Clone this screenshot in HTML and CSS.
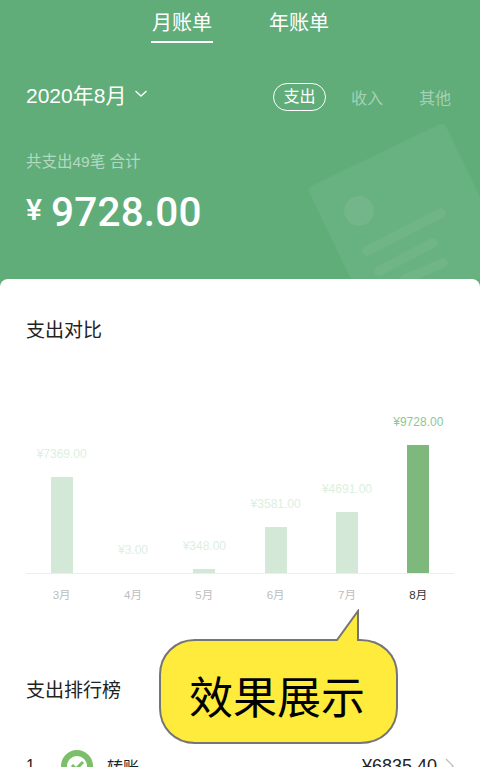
FILE: index.html
```html
<!DOCTYPE html>
<html lang="zh-CN">
<head>
    <meta charset="UTF-8">
    <meta name="viewport" content="width=device-width, initial-scale=1.0">
    <title>月账单</title>
    <link rel="stylesheet" href="styles.css">
</head>
<body>

<div class="page">
    <header class="header">
        <svg class="header-deco" width="200" height="170" viewBox="280 109 200 170">
            <rect x="307" y="188" width="152" height="200" rx="5" fill="#fff" fill-opacity="0.05" transform="rotate(-25.7 307 188)"/>
            <circle cx="359" cy="211" r="15" fill="#fff" fill-opacity="0.07"/>
            <line x1="367" y1="251" x2="441" y2="213" stroke="#fff" stroke-opacity="0.05" stroke-width="10" stroke-linecap="round"/>
            <line x1="379" y1="271" x2="433" y2="243" stroke="#fff" stroke-opacity="0.05" stroke-width="10" stroke-linecap="round"/>
            <line x1="405" y1="279" x2="443" y2="263" stroke="#fff" stroke-opacity="0.05" stroke-width="10" stroke-linecap="round"/>
        </svg>

        <nav class="tabs">
            <span class="tab active">月账单</span>
            <span class="tab">年账单</span>
        </nav>

        <div class="filter-row">
            <div class="date-picker">
                <span>2020年8月</span>
                <svg class="date-arrow" width="14" height="8" viewBox="0 0 14 8">
                    <path d="M1.5 1 L7 6 L12.5 1" fill="none" stroke="#fff" stroke-width="1.3"/>
                </svg>
            </div>
            <div class="types">
                <span class="type active">支出</span>
                <span class="type">收入</span>
                <span class="type">其他</span>
            </div>
        </div>

        <div class="summary">共支出49笔 合计</div>
        <div class="total"><span class="currency">¥</span><span class="amount">9728.00</span></div>
    </header>

    <main class="card">
        <h2 class="section-title compare-title">支出对比</h2>

        <div class="chart">
            <div class="col"><span class="value">¥7369.00</span><div class="bar" style="height: 96px"></div></div>
            <div class="col"><span class="value">¥3.00</span><div class="bar" style="height: 0"></div></div>
            <div class="col"><span class="value">¥348.00</span><div class="bar" style="height: 4px"></div></div>
            <div class="col"><span class="value">¥3581.00</span><div class="bar" style="height: 46px"></div></div>
            <div class="col"><span class="value">¥4691.00</span><div class="bar" style="height: 61px"></div></div>
            <div class="col current"><span class="value">¥9728.00</span><div class="bar" style="height: 128px"></div></div>
        </div>
        <div class="months">
            <span class="month">3月</span>
            <span class="month">4月</span>
            <span class="month">5月</span>
            <span class="month">6月</span>
            <span class="month">7月</span>
            <span class="month current">8月</span>
        </div>

        <h2 class="section-title rank-title">支出排行榜</h2>

        <div class="rank-row">
            <span class="rank-no">1</span>
            <svg class="rank-icon" width="32" height="32" viewBox="0 0 32 32">
                <circle cx="16" cy="16" r="16" fill="#7cbf6a"/>
                <circle cx="16" cy="16" r="10" fill="#fff"/>
                <path d="M11 15 L15 19 L22 12" fill="none" stroke="#7cbf6a" stroke-width="3"/>
            </svg>
            <span class="rank-name">转账</span>
            <span class="rank-amount">¥6835.40</span>
            <svg class="rank-arrow" width="9" height="16" viewBox="0 0 9 16">
                <path d="M1 1 L8 8 L1 15" fill="none" stroke="#bbb" stroke-width="1.2"/>
            </svg>
        </div>
    </main>

    <div class="bubble">
        <svg class="bubble-shape" width="240" height="136" viewBox="0 0 240 136">
            <path d="M36 31 H178 L199 2 V31 H201 C223 31 238 46 238 66 V99 C238 119 223 134 201 134 H36 C16 134 1 119 1 99 V66 C1 46 16 31 36 31 Z" fill="#ffeb3b" stroke="#757575" stroke-width="2"/>
        </svg>
        <span class="bubble-text">效果展示</span>
    </div>
</div>

</body>
</html>
```

FILE: styles.css
```css
body {
    margin: 0;
    font-family: "Liberation Sans", "Noto Sans CJK SC", sans-serif;
}
.page {
    position: relative;
    width: 480px;
    height: 767px;
    overflow: hidden;
    background-color: #60ad7a;
}
.header {
    position: relative;
    height: 279px;
    padding: 0 29px 0 26px;
    color: #fff;
}
.header-deco {
    position: absolute;
    right: 0;
    bottom: 0;
}
.tabs {
    display: flex;
    justify-content: center;
    gap: 55px;
    margin-left: 4px;
    padding-top: 8px;
}
.tab {
    height: 35px;
    padding: 0 1px;
    font-size: 20px;
    line-height: 30px;
    box-sizing: border-box;
}
.tab.active {
    border-bottom: 2px solid #fff;
}
.filter-row {
    display: flex;
    justify-content: space-between;
    align-items: center;
    margin-top: 36px;
}
.date-picker {
    display: flex;
    align-items: center;
    gap: 8px;
    margin-bottom: 5px;
    font-size: 21px;
}
.types {
    display: flex;
    align-items: center;
    gap: 36px;
}
.type {
    font-size: 16px;
    color: rgba(255, 255, 255, 0.45);
}
.type.active {
    padding: 2px 9.5px;
    margin-right: -11px;
    line-height: 22px;
    color: #fff;
    border: 1px solid #fff;
    border-radius: 14px;
}
.summary {
    margin-top: 36px;
    font-size: 15.5px;
    line-height: 24px;
    color: rgba(255, 255, 255, 0.55);
}
.total {
    display: flex;
    align-items: baseline;
    margin-top: 14px;
    font-family: Roboto, sans-serif;
    font-weight: 500;
}
.currency {
    width: 25px;
    font-size: 30px;
    position: relative;
    top: -6px;
}
.amount {
    font-size: 40.5px;
    letter-spacing: 0.2px;
}
.card {
    height: 488px;
    padding: 0 26px;
    box-sizing: border-box;
    background-color: #fff;
    border-radius: 8px 8px 0 0;
}
.section-title {
    margin: 0;
    font-size: 19px;
    font-weight: 400;
    line-height: 28px;
    color: #222;
}
.compare-title {
    padding-top: 38px;
}
.chart {
    display: flex;
    align-items: flex-end;
    height: 228px;
    border-bottom: 1px solid #e6f2e9;
}
.col {
    flex: 1;
    display: flex;
    flex-direction: column;
    align-items: center;
}
.value {
    margin-bottom: 16px;
    font-size: 12px;
    line-height: 14px;
    color: #dcefe0;
}
.bar {
    width: 22px;
    background-color: #d3e8d6;
}
.col.current .value {
    color: #8cc896;
}
.col.current .bar {
    background-color: #7fb87d;
}
.months {
    display: flex;
    margin-top: 13px;
}
.month {
    flex: 1;
    text-align: center;
    font-size: 11.5px;
    line-height: 16px;
    color: #bdbdbd;
}
.month.current {
    color: #333;
}
.rank-title {
    margin-top: 74px;
}
.rank-row {
    display: flex;
    align-items: center;
    margin-top: 45px;
    font-size: 16px;
    color: #222;
}
.rank-no {
    width: 35px;
}
.rank-icon {
    flex-shrink: 0;
}
.rank-name {
    flex: 1;
    margin-left: 14px;
}
.rank-amount {
    margin-right: 8px;
    font-size: 18px;
}
.bubble {
    position: absolute;
    left: 159px;
    top: 609px;
    width: 240px;
    height: 136px;
}
.bubble-shape {
    position: absolute;
    left: 0;
    top: 0;
}
.bubble-text {
    position: absolute;
    left: 30px;
    top: 60px;
    font-size: 44px;
    line-height: 60px;
    color: #000;
}
```
